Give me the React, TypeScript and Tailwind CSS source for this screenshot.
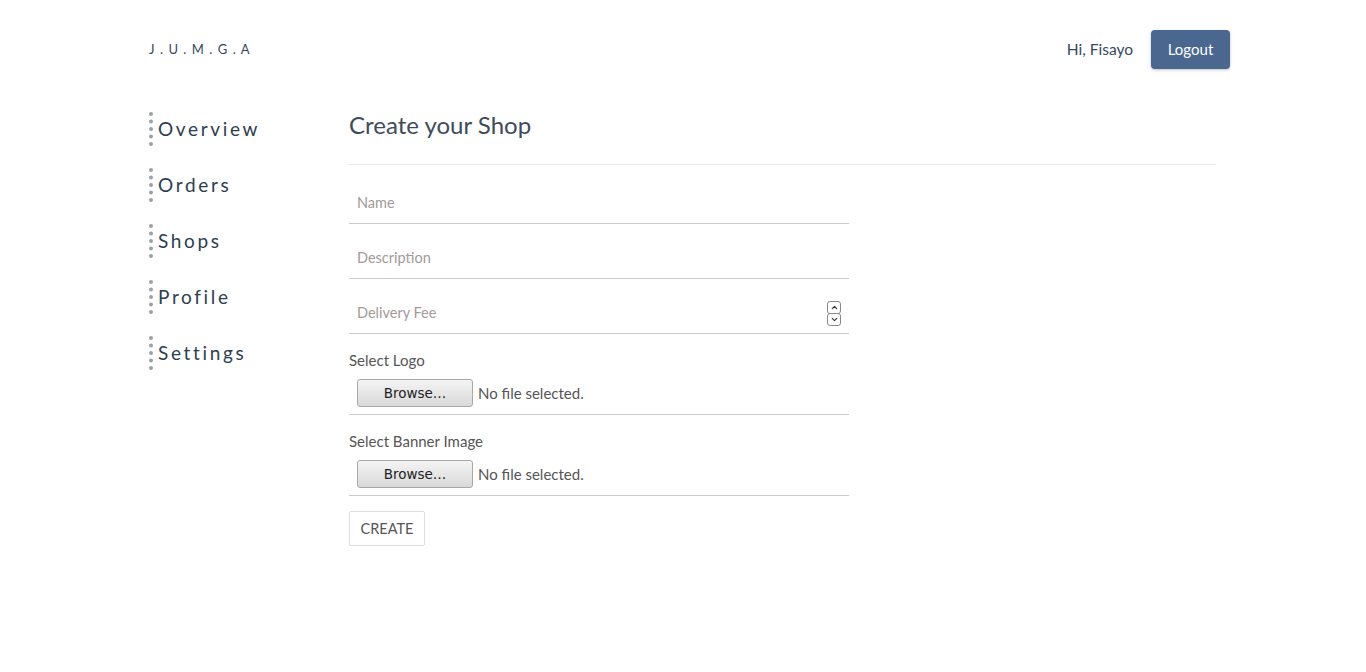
import { ChevronUp, ChevronDown } from 'lucide-react';

const navItems = ['Overview', 'Orders', 'Shops', 'Profile', 'Settings'];

function TextField({ placeholder, spinner }: { placeholder: string; spinner?: boolean }) {
  return (
    <div className="flex items-end h-[55px] border-b border-[#cccccc] px-2 pb-[10px]">
      <span className="flex-1 text-[14.5px] leading-[20px] text-[#a39a98]">{placeholder}</span>
      {spinner && (
        <div className="flex flex-col -mb-[3px]">
          <div className="w-[14px] h-[13px] border border-[#888] rounded-[3px] flex items-center justify-center bg-white">
            <ChevronUp className="w-[9px] h-[9px] text-[#333]" strokeWidth={3} />
          </div>
          <div className="w-[14px] h-[13px] -mt-[1px] border border-[#888] rounded-[3px] flex items-center justify-center bg-white">
            <ChevronDown className="w-[9px] h-[9px] text-[#333]" strokeWidth={3} />
          </div>
        </div>
      )}
    </div>
  );
}

function FileField({ label }: { label: string }) {
  return (
    <div className="border-b border-[#cccccc] pb-[7px]">
      <div className="text-[15px] text-[#555] pt-[14px] leading-[24px]">{label}</div>
      <div className="flex items-center h-[28px] mt-[7px] pl-2">
        <div className="w-[116px] h-[28px] rounded-[3px] border border-[#a8a8a8] bg-gradient-to-b from-[#f4f4f4] to-[#d9d9d9] flex items-center justify-center text-[13.5px] text-[#222] font-['DejaVu_Sans',sans-serif]">
          Browse…
        </div>
        <span className="ml-[5px] text-[15px] text-[#555] leading-[20px]">No file selected.</span>
      </div>
    </div>
  );
}

export default function App() {
  return (
    <div className="min-h-screen bg-white font-['Lato',sans-serif] text-[#34495e]">
      <header className="flex items-center justify-between pl-[149px] pr-[136px] pt-[30px]">
        <div className="text-[13px] tracking-[0.08em] text-[#34495e]">J . U . M . G . A</div>
        <div className="flex items-center">
          <span className="text-[15.5px] text-[#34495e] mr-[18px]">Hi, Fisayo</span>
          <button className="w-[79px] h-[39px] rounded-[4px] bg-[#49678f] text-white text-[15px] shadow-[0_1px_3px_rgba(0,0,0,0.25)]">
            Logout
          </button>
        </div>
      </header>

      <div className="flex pl-[149px] pr-[150px] mt-[43px]">
        <nav className="w-[200px] flex flex-col gap-[22px]">
          {navItems.map((item) => (
            <div
              key={item}
              className="h-[34px] border-l-[4px] border-dotted border-[#9ea0a8] pl-[5px] flex items-center text-[19px] tracking-[0.14em] text-[#2c3e50]"
            >
              {item}
            </div>
          ))}
        </nav>

        <main className="flex-1">
          <h1 className="text-[24px] text-[#3d4c5c] leading-[26px]">Create your Shop</h1>
          <hr className="mt-[26px] border-t border-[#e8e8e8]" />
          <div className="w-[500px] mt-[4px]">
            <TextField placeholder="Name" />
            <TextField placeholder="Description" />
            <TextField placeholder="Delivery Fee" spinner />
            <FileField label="Select Logo" />
            <FileField label="Select Banner Image" />
            <button className="mt-[15px] w-[76px] h-[35px] border border-[#dddddd] rounded-[2px] text-[14.5px] text-[#555] bg-white">
              CREATE
            </button>
          </div>
        </main>
      </div>
    </div>
  );
}
